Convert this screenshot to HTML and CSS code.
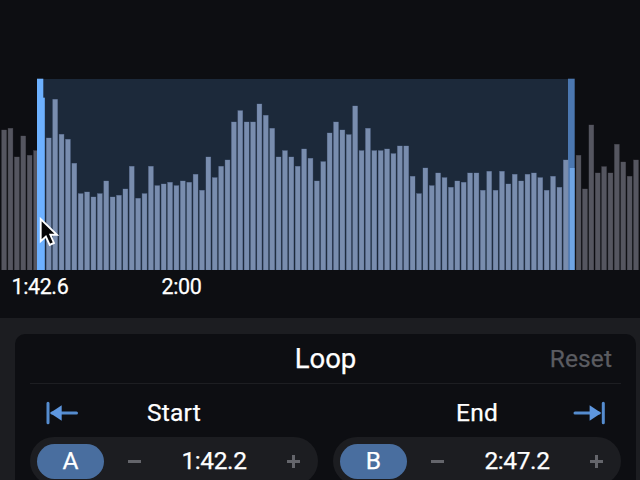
FILE: index.html
```html
<!DOCTYPE html>
<html lang="en">
<head>
<meta charset="utf-8">
<title>Loop</title>
<link rel="stylesheet" href="styles.css">
</head>
<body>
<main class="app">
  <section class="wave">
    <div class="selection"></div>
    <svg class="bars" id="bars" width="640" height="270"></svg>
    <svg class="cursor" width="21" height="31" viewBox="0 0 20 30"><path d="M1.5 2 V23.5 L6.5 19 L10.2 27 L14.3 25.1 L10.8 17.2 H17.2 Z" fill="#050506" stroke="#fff" stroke-width="1.8"/></svg>
  </section>
  <div class="times"><span class="time-start">1:42.6</span><span class="time-mark">2:00</span></div>
  <section class="panel">
    <div class="card">
      <header class="card-head"><span></span><h1>Loop</h1><button class="reset">Reset</button></header>
      <div class="columns">
        <div class="column">
          <div class="label">
            <svg class="arrow" width="32" height="24" viewBox="0 0 32 24"><path d="M2 2.2V21.8M6 12H30.5" stroke="#558ccf" stroke-width="3" stroke-linecap="round"/><path d="M4 12L15.7 4.2V19.8Z" fill="#5e97e0"/></svg>
            <h2>Start</h2><span></span>
          </div>
          <div class="stepper"><span class="badge">A</span><i class="minus"></i><span class="value">1:42.2</span><i class="plus"></i></div>
        </div>
        <div class="column">
          <div class="label">
            <span></span><h2>End</h2>
            <svg class="arrow" width="32" height="24" viewBox="0 0 32 24"><path d="M30.3 2.2V21.8M26 12H2" stroke="#558ccf" stroke-width="3" stroke-linecap="round"/><path d="M28.3 12L16.6 4.2V19.8Z" fill="#5e97e0"/></svg>
          </div>
          <div class="stepper"><span class="badge">B</span><i class="minus"></i><span class="value">2:47.2</span><i class="plus"></i></div>
        </div>
      </div>
    </div>
  </section>
</main>
<script src="wave.js"></script>
</body>
</html>
```
FILE: styles.css
```css
* { box-sizing: border-box; }
body {
  margin: 0;
  background: #0d0e12;
  color: #fff;
  font-family: Roboto, "Liberation Sans", sans-serif;
  -webkit-text-stroke: 0.25px currentColor;
}
.app { width: 640px; height: 480px; overflow: hidden; }
.wave { position: relative; height: 270px; }
.selection {
  position: absolute;
  left: 37px;
  top: 79px;
  width: 537px;
  bottom: 0;
  background: #1c293a;
}
.bars { position: relative; display: block; }
.bar { fill: #555660; stroke: #555660; stroke-opacity: 0.5; stroke-width: 0.6; }
.bar.inside { fill: #798dae; stroke: #6d84ab; }
.bar.at-start { fill: #6db1ff; stroke: none; }
.bar.at-end { fill: #6fa5e5; stroke: none; }
.handle-start { fill: #6db1ff; }
.handle-end { fill: #4b77b0; }
.cursor { position: absolute; left: 39px; top: 217px; }
.times {
  display: flex;
  height: 48px;
  padding: 4px 0 0 11.5px;
  font-size: 21.5px;
  line-height: 25px;
  letter-spacing: -0.4px;
}
.time-start { width: 150px; }
.panel { height: 180px; padding: 16px 4px 0 15px; background: #1c1d21; }
.card {
  height: 180px;
  padding: 0 15px 0 15px;
  background: #0d0e12;
  border-radius: 10px;
}
.card-head {
  display: grid;
  grid-template-columns: 1fr auto 1fr;
  align-items: center;
  height: 50px;
  border-bottom: 1px solid #1d1e22;
}
h1, h2 { margin: 0; font-weight: 400; }
h1 { font-size: 27.5px; line-height: 48px; }
.reset {
  justify-self: end;
  padding: 0 9px 0 0;
  border: 0;
  background: none;
  color: #5b5c61;
  font: 24.5px/48px Roboto, sans-serif;
  letter-spacing: 0.1px;
}
.columns { display: grid; grid-template-columns: 288px 288px; gap: 15px; }
.label {
  display: grid;
  grid-template-columns: 32px 1fr 32px;
  align-items: center;
  height: 53px;
  padding: 4px 16px 0 16px;
  text-align: center;
}
.label h2 { font-size: 24.5px; line-height: 30px; letter-spacing: 0.2px; }
.stepper {
  display: flex;
  align-items: center;
  height: 48px;
  padding-left: 7px;
  border-radius: 24px;
  background: #1c1d21;
  font-size: 24.5px;
}
.badge {
  width: 67px;
  height: 35px;
  border-radius: 18px;
  background: #496e9f;
  line-height: 34px;
  text-align: center;
}
.minus { width: 13px; height: 3px; margin-left: 24px; background: #64656b; }
.value {
  width: 66px;
  margin: 0 40px 0 40px;
  padding-bottom: 2px;
  letter-spacing: -0.4px;
  text-align: center;
  white-space: nowrap;
}
.plus {
  width: 13px;
  height: 13px;
  background:
    linear-gradient(#64656b, #64656b) center / 13px 3px no-repeat,
    linear-gradient(#64656b, #64656b) center / 3px 13px no-repeat;
}
```
FILE: wave.js
```js
// Bar heights in thirds of a pixel, left to right
const levels = [
  420, 425, 339, 402, 344, 358, 517, 396, 512, 407, 392, 320, 229, 234, 219, 229, 267, 219, 224, 243,
  311, 215, 229, 311, 253, 258, 263, 253, 267, 263, 287, 239, 339, 277, 311, 330, 444, 478, 444, 444,
  498, 464, 425, 339, 358, 339, 311, 363, 335, 267, 325, 411, 444, 420, 406, 492, 358, 425, 358, 358,
  363, 349, 372, 372, 281, 229, 306, 253, 291, 277, 248, 267, 263, 291, 291, 239, 296, 239, 296, 258,
  287, 267, 287, 291, 277, 239, 281, 248, 330, 306, 344, 243, 435, 291, 310, 291, 377, 324, 281, 330
];
const START = 6;
const END = 89;
const BASE = 270;
const svg = document.getElementById("bars");

function addRect(className, x, width, height) {
  const rect = document.createElementNS("http://www.w3.org/2000/svg", "rect");
  rect.setAttribute("class", className);
  rect.setAttribute("x", x.toFixed(2));
  rect.setAttribute("y", (BASE - height).toFixed(2));
  rect.setAttribute("width", width);
  rect.setAttribute("height", height.toFixed(2));
  svg.append(rect);
}

addRect("handle-end", 568, 6.7, 191.3);
levels.forEach((level, i) => {
  let name = "bar";
  if (i > START && i < END) name += " inside";
  if (i === START) name += " at-start";
  if (i === END) name += " at-end";
  addRect(name, 1.7 + i * 6.383, 4.8, level / 3);
});
addRect("handle-start", 37, 6.3, 191.3);
```
